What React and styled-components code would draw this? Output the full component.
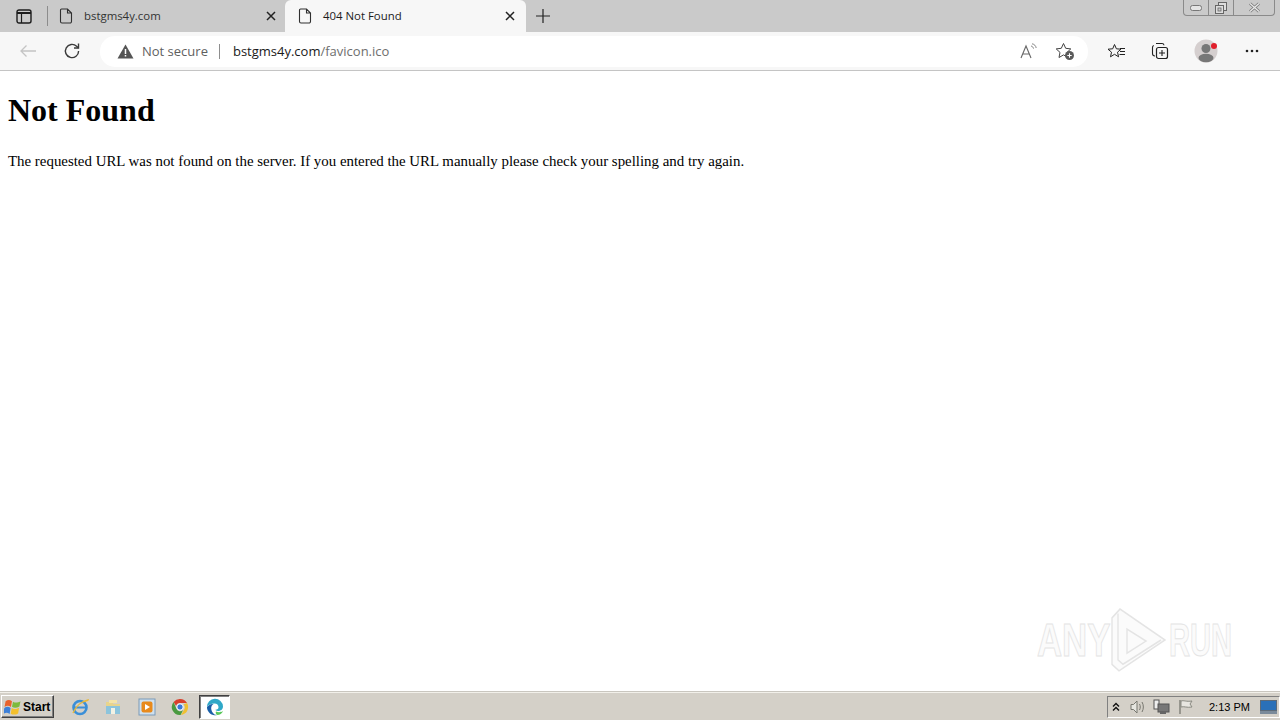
import React from "react";
import styled, { createGlobalStyle } from "styled-components";

const GlobalStyle = createGlobalStyle`
  html, body {
    margin: 0;
    padding: 0;
    height: 100%;
    overflow: hidden;
    background: #fff;
  }
  #root {
    height: 100%;
  }
`;

const uiFont = `"Open Sans", "Noto Sans", "Liberation Sans", sans-serif`;

const Window = styled.div`
  width: 1280px;
  height: 720px;
  display: flex;
  flex-direction: column;
  position: relative;
  overflow: hidden;
`;

const TabStrip = styled.div`
  height: 32px;
  flex: none;
  background: #cacaca;
  display: flex;
  align-items: stretch;
  position: relative;
`;

const SideButton = styled.div`
  width: 47px;
  flex: none;
  display: flex;
  align-items: center;
  justify-content: center;
`;

const TabDivider = styled.div`
  width: 1px;
  height: 20px;
  flex: none;
  align-self: center;
  background: #8c8c8c;
`;

const Tab = styled.div`
  width: ${(p) => p.$width}px;
  flex: none;
  display: flex;
  align-items: center;
  box-sizing: border-box;
  padding-left: ${(p) => (p.$active ? 13 : 11)}px;
  padding-right: ${(p) => (p.$active ? 10 : 8)}px;
  padding-bottom: 1px;
  background: ${(p) => (p.$active ? "#f7f7f7" : "transparent")};
  border-radius: ${(p) => (p.$active ? "6px 6px 0 0" : "0")};
  font: 400 11.4px ${uiFont};
  color: ${(p) => (p.$active ? "#1c1c1c" : "#333")};
`;

const TabTitle = styled.span`
  flex: 1;
  margin-left: 11px;
  white-space: nowrap;
`;

const NewTab = styled.div`
  width: 34px;
  flex: none;
  display: flex;
  align-items: center;
  justify-content: center;
  padding-bottom: 1px;
`;

const WindowControls = styled.div`
  position: absolute;
  top: 0;
  left: 1183px;
  width: 92px;
  height: 16px;
  box-sizing: border-box;
  display: flex;
  border: 1px solid #8a8a8a;
  border-top: none;
  border-radius: 0 0 4px 4px;
`;

const ControlCell = styled.div`
  width: ${(p) => p.$width}px;
  flex: none;
  box-sizing: border-box;
  display: flex;
  align-items: center;
  justify-content: center;
  border-left: ${(p) => (p.$divided ? "1px solid #8a8a8a" : "none")};
`;

const Toolbar = styled.div`
  height: 39px;
  flex: none;
  box-sizing: border-box;
  background: #f7f7f7;
  border-bottom: 1px solid #c4c4c4;
  display: flex;
  align-items: center;
`;

const NavButton = styled.div`
  width: ${(p) => p.$width}px;
  flex: none;
  box-sizing: border-box;
  padding-left: ${(p) => p.$inset || 0}px;
  display: flex;
  align-items: center;
  justify-content: center;
`;

const Omnibox = styled.div`
  width: 988px;
  height: 31px;
  flex: none;
  margin-left: 6px;
  box-sizing: border-box;
  background: #fff;
  border-radius: 15px;
  display: flex;
  align-items: center;
  padding-left: 17px;
  font: 400 13px ${uiFont};
`;

const NotSecure = styled.span`
  margin-left: 8px;
  color: #5f5f5f;
  white-space: nowrap;
`;

const OmniDivider = styled.div`
  width: 1px;
  height: 15px;
  margin: 0 13px 0 11px;
  background: #8e8e8e;
`;

const Host = styled.span`
  color: #1a1a1a;
  white-space: nowrap;
`;

const UrlPath = styled.span`
  color: #6e6e6e;
  white-space: nowrap;
`;

const OmniActions = styled.div`
  margin-left: auto;
  display: flex;
  align-items: center;
  gap: 17px;
  padding-right: 13px;
`;

const ToolIcons = styled.div`
  display: flex;
  align-items: center;
  margin-left: 6px;
`;

const Page = styled.main`
  flex: 1;
  background: #fff;
  padding: 8px;
  color: #000;
  font-family: "Liberation Serif", "Times New Roman", serif;
  font-size: 14.9px;
`;

const Heading = styled.h1`
  font-size: 32px;
  font-weight: 700;
  margin: 13px 0 23px;
  line-height: 37px;
`;

const Body = styled.p`
  margin: 0;
  line-height: 18px;
  white-space: nowrap;
`;

const Watermark = styled.div`
  position: absolute;
  left: 1037px;
  top: 608px;
  display: flex;
  align-items: center;
  pointer-events: none;
`;

const WatermarkText = styled.span`
  font: 700 47px/64px "Liberation Sans", sans-serif;
  transform: scaleX(${(p) => p.$squeeze});
  transform-origin: left center;
  width: ${(p) => p.$width}px;
  margin-left: ${(p) => p.$gap || 0}px;
  color: #fbfbfb;
  -webkit-text-stroke: 1px #e4e4e4;
  white-space: nowrap;
`;

const Taskbar = styled.footer`
  height: 28px;
  flex: none;
  box-sizing: border-box;
  background: #d4d0c8;
  border-top: 1px solid #f2f0ea;
  box-shadow: 0 -1px 0 #c9c6bf;
  display: flex;
  align-items: center;
  position: relative;
`;

const StartButton = styled.div`
  width: 53px;
  height: 23px;
  margin-left: 1px;
  flex: none;
  box-sizing: border-box;
  display: flex;
  align-items: center;
  gap: 2px;
  padding-left: 2px;
  background: #d4d0c8;
  border: 1px solid;
  border-color: #fff #404040 #404040 #fff;
  box-shadow: inset -1px -1px 0 #808080;
  font: 700 12px "Liberation Sans", Tahoma, sans-serif;
  color: #000;
`;

const QuickLaunch = styled.div`
  display: flex;
  align-items: center;
  margin-left: 9px;
`;

const AppSlot = styled.div`
  width: 33.5px;
  height: 24px;
  flex: none;
  display: flex;
  align-items: center;
  justify-content: center;
`;

const ActiveApp = styled(AppSlot)`
  width: 31px;
  height: 24px;
  margin-left: 2px;
  box-sizing: border-box;
  background: #fff;
  border: 1px solid;
  border-color: #404040 #fff #fff #404040;
  box-shadow: inset 1px 1px 0 #808080;
`;

const Tray = styled.div`
  margin-left: auto;
  width: 173px;
  height: 22px;
  box-sizing: border-box;
  display: flex;
  align-items: center;
  border: 1px solid;
  border-color: #808080 #fff #fff #808080;
`;

const TrayIcon = styled.div`
  width: ${(p) => p.$width}px;
  flex: none;
  display: flex;
  align-items: center;
  justify-content: center;
`;

const DesktopIcon = styled(TrayIcon)`
  margin-left: auto;
  margin-right: 2px;
`;

const Clock = styled.span`
  margin-left: 11px;
  font: 400 11px "Liberation Sans", Tahoma, sans-serif;
  color: #000;
  white-space: nowrap;
`;

const PageIcon = () => (
  <svg width="14" height="16" viewBox="0 0 14 16">
    <path
      d="M2.5 1h6l4 4v8.5a1.5 1.5 0 0 1-1.5 1.5H3a1.5 1.5 0 0 1-1.5-1.5V2A1 1 0 0 1 2.5 1zM8.5 1v4h4"
      fill="none"
      stroke="#303030"
      strokeWidth="1.1"
    />
  </svg>
);

const CloseIcon = () => (
  <svg width="12" height="12" viewBox="0 0 12 12">
    <path d="M2 2l8 8M10 2l-8 8" stroke="#222" strokeWidth="1.5" />
  </svg>
);

const App = () => (
  <Window>
    <GlobalStyle />
    <TabStrip>
      <SideButton>
        <svg width="16" height="15" viewBox="0 0 16 15">
          <rect x="1" y="1" width="14" height="13" rx="2" fill="none" stroke="#1c1c1c" strokeWidth="1.4" />
          <path d="M1 4h14" stroke="#1c1c1c" strokeWidth="2" />
          <path d="M5.5 4v10" stroke="#1c1c1c" strokeWidth="1.2" />
        </svg>
      </SideButton>
      <TabDivider />
      <Tab $width={237}>
        <PageIcon />
        <TabTitle>bstgms4y.com</TabTitle>
        <CloseIcon />
      </Tab>
      <Tab $width={241} $active>
        <PageIcon />
        <TabTitle>404 Not Found</TabTitle>
        <CloseIcon />
      </Tab>
      <NewTab>
        <svg width="16" height="16" viewBox="0 0 16 16">
          <path d="M8 1v14M1 8h14" stroke="#222" strokeWidth="1.2" />
        </svg>
      </NewTab>
      <WindowControls>
        <ControlCell $width={24}>
          <svg width="12" height="6" viewBox="0 0 12 6">
            <rect x="0.5" y="0.5" width="11" height="5" rx="2" fill="#e4e4e4" stroke="#777" />
          </svg>
        </ControlCell>
        <ControlCell $width={25} $divided>
          <svg width="12" height="12" viewBox="0 0 12 12">
            <rect x="3.5" y="0.5" width="8" height="8" fill="#ddd" stroke="#666" />
            <rect x="0.5" y="3.5" width="8" height="8" fill="#ddd" stroke="#666" />
            <rect x="3" y="6" width="3" height="3" fill="#cacaca" stroke="#666" strokeWidth="0.8" />
          </svg>
        </ControlCell>
        <ControlCell $width={41} $divided>
          <svg width="13" height="11" viewBox="0 0 13 11">
            <path d="M2 1.5l9 8M11 1.5l-9 8" stroke="#777" strokeWidth="3" />
            <path d="M2 1.5l9 8M11 1.5l-9 8" stroke="#e8e8e8" strokeWidth="1.4" />
          </svg>
        </ControlCell>
      </WindowControls>
    </TabStrip>

    <Toolbar>
      <NavButton $width={50} $inset={6}>
        <svg width="18" height="14" viewBox="0 0 18 14">
          <path d="M17 7H2M7.5 1.5L2 7l5.5 5.5" fill="none" stroke="#c4c4c4" strokeWidth="1.3" />
        </svg>
      </NavButton>
      <NavButton $width={44}>
        <svg width="18" height="18" viewBox="0 0 18 18">
          <path d="M15.6 9a6.6 6.6 0 1 1-2-4.7L15.5 6" fill="none" stroke="#3a3a3a" strokeWidth="1.4" />
          <path d="M15.5 1.5V6H11" fill="none" stroke="#3a3a3a" strokeWidth="1.4" />
        </svg>
      </NavButton>
      <Omnibox>
        <svg width="17" height="15" viewBox="0 0 17 15">
          <path d="M8.5 0.5L16.5 14.5H0.5z" fill="#555" />
          <path d="M8.5 5v5M8.5 11v1.6" stroke="#fff" strokeWidth="1.5" />
        </svg>
        <NotSecure>Not secure</NotSecure>
        <OmniDivider />
        <Host>bstgms4y.com</Host>
        <UrlPath>/favicon.ico</UrlPath>
        <OmniActions>
          <svg width="18" height="16" viewBox="0 0 18 16">
            <path d="M1 15L6 3l5 12M2.8 11h6.4" fill="none" stroke="#666" strokeWidth="1.1" />
            <path d="M11 3c1.4.3 2.2 1.2 2.5 2.6M12 .8c2.4.4 3.8 2 4.2 4.2" fill="none" stroke="#777" strokeWidth="0.9" />
          </svg>
          <svg width="20" height="19" viewBox="0 0 20 19">
            <path
              d="M8.5 1.5l2.2 4.8 5.1.6-3.8 3.5 1 5.1-4.5-2.6-4.5 2.6 1-5.1L1.2 6.9l5.1-.6z"
              fill="none"
              stroke="#444"
              strokeWidth="1"
            />
            <circle cx="14.5" cy="13.5" r="4.5" fill="#5a5a5a" />
            <path d="M14.5 11.3v4.4M12.3 13.5h4.4" stroke="#fff" strokeWidth="1.1" />
          </svg>
        </OmniActions>
      </Omnibox>
      <ToolIcons>
        <NavButton $width={44}>
          <svg width="19" height="17" viewBox="0 0 19 17">
            <path
              d="M7.5 1.5l1.9 4.3 4.6.4-3.5 3 1.1 4.6-4.1-2.5-4 2.5 1-4.6L1 6.2l4.7-.4z"
              fill="none"
              stroke="#222"
              strokeWidth="1"
            />
            <path d="M13 5.5h5M13 8.5h5M12.500 11.500h5.500" stroke="#222" strokeWidth="1.1" />
          </svg>
        </NavButton>
        <NavButton $width={44}>
          <svg width="18" height="18" viewBox="0 0 18 18">
            <path d="M5 1.500h6a2 2 0 0 1 2 1.800M2.800 3.500a2 2 0 0 0-1.300 2v6c0 1.500 1 2.500 2.500 2.500" fill="none" stroke="#222" strokeWidth="1.1" />
            <rect x="5.500" y="5.500" width="11" height="11" rx="2" fill="none" stroke="#222" strokeWidth="1.2" />
            <path d="M11 8v6M8 11h6" stroke="#222" strokeWidth="1.1" />
          </svg>
        </NavButton>
        <NavButton $width={48}>
          <svg width="28" height="24" viewBox="0 0 24 24">
            <circle cx="12" cy="12" r="11.500" fill="#d5cfcf" />
            <circle cx="12" cy="9.500" r="4.500" fill="#777" />
            <ellipse cx="12" cy="19" rx="7.500" ry="4.200" fill="#777" />
            <circle cx="20" cy="7" r="3" fill="#e0202c" />
          </svg>
        </NavButton>
        <NavButton $width={44}>
          <svg width="14" height="4" viewBox="0 0 14 4">
            <circle cx="2" cy="2" r="1.300" fill="#222" />
            <circle cx="7" cy="2" r="1.300" fill="#222" />
            <circle cx="12" cy="2" r="1.300" fill="#222" />
          </svg>
        </NavButton>
      </ToolIcons>
    </Toolbar>

    <Page>
      <Heading>Not Found</Heading>
      <Body>The requested URL was not found on the server. If you entered the URL manually please check your spelling and try again.</Body>
    </Page>

    <Watermark>
      <WatermarkText $squeeze={0.74} $width={73}>ANY</WatermarkText>
      <svg width="57" height="64" viewBox="4 3 57 58" preserveAspectRatio="none">
        <g fill="#fbfbfb" stroke="#e4e4e4" strokeWidth="1.4">
          <path d="M6 12v42l7 6 46-28L14 4z" />
          <path d="M12 8v42l5 4 38-22" />
          <path d="M21 22v22l19-11z" />
        </g>
      </svg>
      <WatermarkText $squeeze={0.62} $width={62} $gap={2}>RUN</WatermarkText>
    </Watermark>

    <Taskbar>
      <StartButton>
        <svg width="17" height="16" viewBox="0 0 16 15">
          <path d="M1.500 2c2-1.500 4-1.500 6 0L6.500 7.500c-2-1.500-4-1.500-6 0z" fill="#e8622c" />
          <path d="M8.500 2.500c2 1.200 4 1.200 7-.500L14.500 7c-2.500 1.500-5 1.500-7 .300z" fill="#7dba3c" />
          <path d="M.300 8.500c2-1.500 4-1.500 5.900 0L5.300 14c-2-1.500-4-1.500-6 0z" fill="#3d80d8" />
          <path d="M7.300 8.500c2 1.200 4 1.200 6.900-.300L13.300 13.500c-2.500 1.500-5 1.500-7 .300z" fill="#f4c02c" />
        </svg>
        Start
      </StartButton>
      <QuickLaunch>
        <AppSlot>
          <svg width="18" height="18" viewBox="0 0 18 18">
            <circle cx="9" cy="9.500" r="6.500" fill="none" stroke="#3a8fd8" strokeWidth="2.600" />
            <path d="M3 9.500h12" stroke="#3a8fd8" strokeWidth="2" />
            <path d="M2 15c3-7 9-12 15-13-1 1-3 1-5 2" fill="none" stroke="#e8b838" strokeWidth="1.300" />
          </svg>
        </AppSlot>
        <AppSlot>
          <svg width="18" height="18" viewBox="0 0 18 18">
            <path d="M2 4h6l1.500 2H16v10H2z" fill="#e8d48c" />
            <path d="M2 8h14v8H2z" fill="#8cc4dc" />
            <rect x="7" y="10" width="4" height="6" fill="#f2f2e4" />
            <rect x="5" y="2" width="8" height="3" fill="#f4e4a8" />
          </svg>
        </AppSlot>
        <AppSlot>
          <svg width="18" height="18" viewBox="0 0 18 18">
            <rect x="1" y="1" width="16" height="16" fill="#cfe0ee" stroke="#7a9ab8" />
            <rect x="3.500" y="3.500" width="11" height="11" rx="2" fill="#e88a1c" />
            <path d="M7 6l5 3-5 3z" fill="#fff" />
          </svg>
        </AppSlot>
        <AppSlot>
          <svg width="18" height="18" viewBox="0 0 18 18">
            <path d="M9 1a8 8 0 0 1 7 4H9a4 4 0 0 0-3.900 3L2.600 4A8 8 0 0 1 9 1z" fill="#d8402c" />
            <path d="M16 5a8 8 0 0 1-6 12l3.500-6A4 4 0 0 0 12.500 6.500z" fill="#f0c030" />
            <path d="M2.600 4A8 8 0 0 0 9.600 17l2.500-5A4 4 0 0 1 5.300 10.500z" fill="#4a9a40" />
            <circle cx="9" cy="9" r="3.200" fill="#3a78d8" stroke="#fff" />
          </svg>
        </AppSlot>
        <ActiveApp>
          <svg width="18" height="18" viewBox="0 0 18 18">
            <path d="M1 9a8 8 0 0 1 16-.500c0 3-2.500 4.500-5 4.500-1.500 0-2.500-.500-2.500-1.200 2 0 3-1 3-2.500C12.500 7 11 5.500 8.500 5.500 5 5.500 2.500 7 1 9z" fill="#2fa8c8" />
            <path d="M1 9c1.500-2 4-3.500 6.500-3-3 1.500-3.500 7 1 10.500.500.300 1.500.500 2.500.500A8 8 0 0 1 1 9z" fill="#1a5fa8" />
            <path d="M11 17c3 0 5-1.500 6-4-2 1.500-5 1.500-7 .500-.500.800-.500 2 1 3.500z" fill="#5ac85a" />
          </svg>
        </ActiveApp>
      </QuickLaunch>
      <Tray>
        <TrayIcon $width={16}>
          <svg width="8" height="10" viewBox="0 0 8 10">
            <path d="M1 4.500L4 1.500l3 3M1 8.500l3-3 3 3" fill="none" stroke="#111" strokeWidth="1.400" />
          </svg>
        </TrayIcon>
        <TrayIcon $width={26}>
          <svg width="17" height="16" viewBox="0 0 17 16">
            <path d="M2 5.500h2.500L8 2v12l-3.500-3.500H2z" fill="#e6e6e0" stroke="#77776f" />
            <path d="M10.500 5c1 1.800 1 4.200 0 6M13 3c1.800 3 1.800 7 0 10" fill="none" stroke="#77776f" />
          </svg>
        </TrayIcon>
        <TrayIcon $width={23}>
          <svg width="17" height="16" viewBox="0 0 17 16">
            <rect x="1" y="1" width="5" height="9" fill="#eee" stroke="#555" />
            <rect x="5" y="5" width="11" height="8" fill="#777" stroke="#555" />
            <rect x="7" y="13" width="6" height="2" fill="#666" />
          </svg>
        </TrayIcon>
        <TrayIcon $width={25}>
          <svg width="16" height="16" viewBox="0 0 16 16">
            <path d="M2 1v14" stroke="#77776f" strokeWidth="1.300" />
            <path d="M3 2c3-1 5 1 11 0l-2 3 2 3c-5 1-8-1-11 0z" fill="#e8e6e0" stroke="#8a8a82" />
          </svg>
        </TrayIcon>
        <Clock>2:13 PM</Clock>
        <DesktopIcon $width={18}>
          <svg width="17" height="14" viewBox="0 0 17 14">
            <rect x="0.500" y="0.500" width="16" height="10" fill="#2a70b8" stroke="#5c6a78" />
            <rect x="0" y="11" width="17" height="3" fill="#7a8a9a" />
          </svg>
        </DesktopIcon>
      </Tray>
    </Taskbar>
  </Window>
);

export default App;
